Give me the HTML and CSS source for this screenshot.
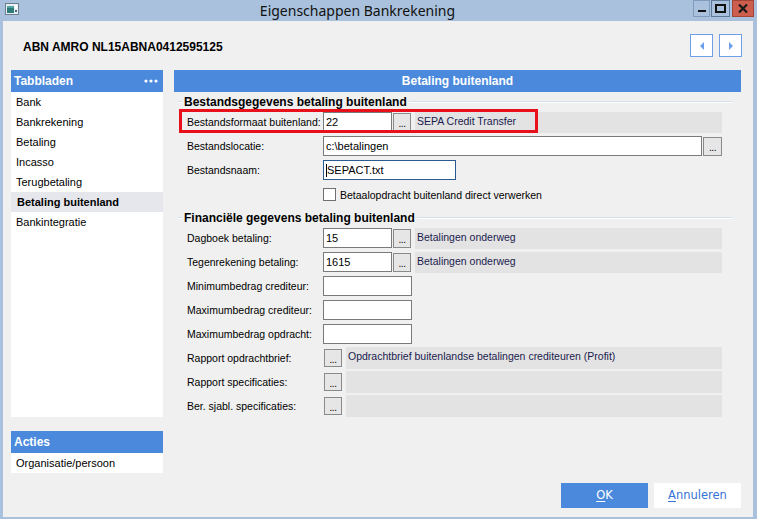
FILE: index.html
```html
<!DOCTYPE html>
<html>
<head>
<meta charset="utf-8">
<link rel="stylesheet" href="styles.css">
</head>
<body>
<div class="window">
  <div class="titlebar">
    <svg class="app-icon" width="14" height="12" viewBox="0 0 14 12">
      <rect x="0.5" y="0.5" width="13" height="11" fill="#e8eef4" stroke="#6b7f8e"/>
      <rect x="2" y="3" width="7" height="7" fill="#2e7c7a"/>
      <rect x="2" y="3" width="7" height="2" fill="#4fa3a0"/>
      <rect x="10" y="2" width="2" height="4" fill="#ffffff"/>
      <rect x="10" y="7" width="2" height="2" fill="#3c6b8a"/>
    </svg>
    <div class="title">Eigenschappen Bankrekening</div>
    <div class="controls">
      <div class="ctl ctl-min"><span class="min-bar"></span></div>
      <div class="ctl ctl-max"><span class="max-box"></span></div>
      <div class="ctl ctl-close">
        <svg width="10" height="9" viewBox="0 0 10 9"><path d="M1 0.5 L9 8.5 M9 0.5 L1 8.5" stroke="#1a1a1a" stroke-width="2.2"/></svg>
      </div>
    </div>
  </div>

  <div class="client">
    <div class="header">
      <div class="account">ABN AMRO NL15ABNA0412595125</div>
      <div class="navbtn"><svg width="6" height="10" viewBox="0 0 6 10"><path d="M5 1 L1 5 L5 9 Z" fill="#6d9eeb"/></svg></div>
      <div class="navbtn"><svg width="6" height="10" viewBox="0 0 6 10"><path d="M1 1 L5 5 L1 9 Z" fill="#6d9eeb"/></svg></div>
    </div>

    <div class="body">
      <div class="sidebar">
        <div class="side-head">
          <span>Tabbladen</span>
          <svg width="14" height="4" viewBox="0 0 14 4"><circle cx="2" cy="2" r="1.6" fill="#fff"/><circle cx="7" cy="2" r="1.6" fill="#fff"/><circle cx="12" cy="2" r="1.6" fill="#fff"/></svg>
        </div>
        <div class="side-list">
          <div class="side-item">Bank</div>
          <div class="side-item">Bankrekening</div>
          <div class="side-item">Betaling</div>
          <div class="side-item">Incasso</div>
          <div class="side-item">Terugbetaling</div>
          <div class="side-item active">Betaling buitenland</div>
          <div class="side-item">Bankintegratie</div>
        </div>
        <div class="side-head acties"><span>Acties</span></div>
        <div class="side-list short">
          <div class="side-item">Organisatie/persoon</div>
        </div>
      </div>

      <div class="panel">
        <div class="panel-head">Betaling buitenland</div>
        <div class="panel-body">
          <div class="group-head first"><span class="gh-text">Bestandsgegevens betaling buitenland</span><span class="gh-line"></span></div>

          <div class="row">
            <span class="lbl">Bestandsformaat buitenland:</span>
            <div class="inp w69">22</div>
            <div class="ell">...</div>
            <div class="desc w307">SEPA Credit Transfer</div>
            <div class="highlight"></div>
          </div>
          <div class="row">
            <span class="lbl">Bestandslocatie:</span>
            <div class="inp w379">c:\betalingen</div>
            <div class="ell w19">...</div>
          </div>
          <div class="row">
            <span class="lbl">Bestandsnaam:</span>
            <div class="inp w133 focus"><span class="caret"></span>SEPACT.txt</div>
          </div>
          <div class="row">
            <span class="lbl"></span>
            <span class="check"></span>
            <span class="check-lbl">Betaalopdracht buitenland direct verwerken</span>
          </div>

          <div class="group-head second"><span class="gh-text">Financiële gegevens betaling buitenland</span><span class="gh-line"></span></div>

          <div class="row">
            <span class="lbl">Dagboek betaling:</span>
            <div class="inp w69">15</div>
            <div class="ell">...</div>
            <div class="desc w307">Betalingen onderweg</div>
          </div>
          <div class="row">
            <span class="lbl">Tegenrekening betaling:</span>
            <div class="inp w69">1615</div>
            <div class="ell">...</div>
            <div class="desc w307">Betalingen onderweg</div>
          </div>
          <div class="row">
            <span class="lbl">Minimumbedrag crediteur:</span>
            <div class="inp w89"></div>
          </div>
          <div class="row">
            <span class="lbl">Maximumbedrag crediteur:</span>
            <div class="inp w89"></div>
          </div>
          <div class="row">
            <span class="lbl">Maximumbedrag opdracht:</span>
            <div class="inp w89"></div>
          </div>
          <div class="row">
            <span class="lbl">Rapport opdrachtbrief:</span>
            <div class="ell solo">...</div>
            <div class="desc wide">Opdrachtbrief buitenlandse betalingen crediteuren (Profit)</div>
          </div>
          <div class="row">
            <span class="lbl">Rapport specificaties:</span>
            <div class="ell solo">...</div>
            <div class="desc wide"></div>
          </div>
          <div class="row">
            <span class="lbl">Ber. sjabl. specificaties:</span>
            <div class="ell solo">...</div>
            <div class="desc wide"></div>
          </div>
        </div>
      </div>
    </div>

    <div class="footer">
      <div class="btn btn-ok"><u>O</u>K</div>
      <div class="btn btn-cancel"><u>A</u>nnuleren</div>
    </div>
  </div>
</div>
</body>
</html>
```

FILE: styles.css
```css
html, body {
  margin: 0;
  padding: 0;
}
body {
  width: 757px;
  height: 519px;
  overflow: hidden;
  background: #a9c1dc;
  font-family: "Liberation Sans", Arial, sans-serif;
  color: #000;
}
.window {
  display: flex;
  flex-direction: column;
  height: 519px;
}

/* title bar */
.titlebar {
  height: 21px;
  display: flex;
  align-items: flex-start;
  flex: none;
}
.app-icon {
  margin: 3px 3px 0 5px;
  flex: none;
}
.title {
  flex: 1;
  text-align: center;
  font-family: "Noto Sans", "Open Sans", sans-serif;
  font-size: 14px;
  line-height: 21px;
  color: #111;
}
.controls {
  display: flex;
  margin-right: 3px;
  flex: none;
}
.ctl {
  height: 17px;
  box-sizing: border-box;
  display: flex;
  align-items: center;
  justify-content: center;
}
.ctl-min {
  width: 17px;
  border: 1px solid #7f9bbd;
  margin-right: 1px;
}
.min-bar {
  width: 8px;
  height: 2px;
  background: #111;
  margin-top: 4px;
}
.ctl-max {
  width: 19px;
  border: 1px solid #5f7a99;
  margin-right: 2px;
}
.max-box {
  width: 7px;
  height: 5px;
  border: 2px solid #111;
  border-top-width: 2px;
}
.ctl-close {
  width: 22px;
  background: #cd5e4d;
  border: 1px solid #a34536;
}

/* client */
.client {
  flex: 1;
  margin: 0 4px 2px 3px;
  background: #f0f0f0;
  display: flex;
  flex-direction: column;
}
.header {
  height: 49px;
  flex: none;
  display: flex;
  align-items: center;
  padding: 0 11px 0 20px;
  gap: 6px;
}
.account {
  flex: 1;
  font-weight: bold;
  font-size: 12px;
  padding-top: 2px;
}
.navbtn {
  width: 23px;
  height: 23px;
  box-sizing: border-box;
  border: 1px solid #6f9fe6;
  background: #fff;
  display: flex;
  align-items: center;
  justify-content: center;
}

.body {
  height: 403px;
  flex: none;
  display: flex;
  gap: 11px;
  padding: 0 12px 0 8px;
}

/* sidebar */
.sidebar {
  width: 152px;
  flex: none;
  display: flex;
  flex-direction: column;
}
.side-head {
  height: 22px;
  background: #4a89dc;
  color: #fff;
  font-weight: bold;
  font-size: 12px;
  display: flex;
  align-items: center;
  justify-content: space-between;
  padding: 0 5px 0 3px;
}
.side-head.acties {
  margin-top: 14px;
}
.side-list {
  background: #fff;
  height: 325px;
}
.side-list.short {
  height: 20px;
}
.side-item {
  height: 20px;
  line-height: 20px;
  padding-left: 5px;
  font-size: 11px;
}
.side-item.active {
  background: #e6e7ec;
  font-weight: bold;
  padding-left: 6px;
}

/* main panel */
.panel {
  flex: 1;
  display: flex;
  flex-direction: column;
}
.panel-head {
  height: 22px;
  line-height: 22px;
  background: #4a89dc;
  color: #fff;
  font-weight: bold;
  font-size: 12px;
  text-align: center;
}
.panel-body {
  padding-top: 2px;
}
.group-head {
  display: flex;
  align-items: center;
  margin: 0 9px 0 4px;
  height: 16px;
}
.group-head.second {
  height: 20px;
  padding-top: 4px;
  box-sizing: border-box;
}
.group-head::before {
  content: "";
  width: 4px;
  height: 0;
  border-top: 1px solid #d3dfeb;
  border-bottom: 1px solid #fff;
}
.gh-text {
  font-weight: bold;
  font-size: 12px;
  line-height: 16px;
  padding: 0 2px;
}
.gh-line {
  flex: 1;
  height: 0;
  border-top: 1px solid #d3dfeb;
  border-bottom: 1px solid #fff;
}

.row {
  position: relative;
  height: 24px;
  display: flex;
  align-items: center;
  padding-left: 13px;
  font-size: 10.5px;
}
.lbl {
  width: 136px;
  flex: none;
  white-space: nowrap;
}
.inp {
  height: 20px;
  box-sizing: border-box;
  border: 1px solid #7a7a7a;
  background: #fff;
  padding-left: 2px;
  line-height: 18px;
  font-size: 11px;
  flex: none;
  display: flex;
  align-items: center;
}
.inp.focus {
  border-color: #2b5b91;
}
.caret {
  width: 1px;
  height: 13px;
  background: #000;
  margin-right: 0;
}
.w69 { width: 69px; }
.w89 { width: 89px; }
.w133 { width: 133px; }
.w379 { width: 379px; }

.ell {
  width: 18px;
  height: 19px;
  box-sizing: border-box;
  margin-left: 1px;
  border: 1px solid #8a8a8a;
  background: #e6e6e6;
  font-size: 10px;
  line-height: 20px;
  text-align: center;
  letter-spacing: -0.5px;
  flex: none;
  overflow: hidden;
}
.ell.w19 { width: 19px; }
.ell.solo {
  height: 18px;
  line-height: 19px;
}
.desc {
  margin-left: 4px;
  height: 21px;
  box-sizing: border-box;
  background: #e3e3e3;
  padding: 2px 0 0 2px;
  font-size: 10.5px;
  line-height: 14px;
  color: #1b1b4e;
  flex: none;
  align-self: center;
  white-space: nowrap;
}
.w307 { width: 307px; }
.desc.wide {
  width: 376px;
  height: 22px;
}

.check {
  width: 13px;
  height: 13px;
  box-sizing: border-box;
  border: 1px solid #707070;
  background: #fff;
  flex: none;
  margin-top: 1px;
}
.check-lbl {
  margin-left: 4px;
  margin-top: 1px;
}

.highlight {
  position: absolute;
  left: 5px;
  top: -1px;
  width: 359px;
  height: 24px;
  box-sizing: border-box;
  border: 3px solid #e8101a;
  pointer-events: none;
}

/* footer */
.footer {
  display: flex;
  justify-content: flex-end;
  gap: 6px;
  padding: 10px 12px 0 0;
}
.btn {
  width: 87px;
  height: 25px;
  line-height: 25px;
  text-align: center;
  font-size: 12px;
  font-family: "DejaVu Sans", Tahoma, sans-serif;
  font-size: 11.5px;
}
.btn u {
  text-underline-offset: 2px;
}
.btn-ok {
  background: #4a89dc;
  color: #fff;
}
.btn-cancel {
  background: #fff;
  color: #3574d4;
}
```
